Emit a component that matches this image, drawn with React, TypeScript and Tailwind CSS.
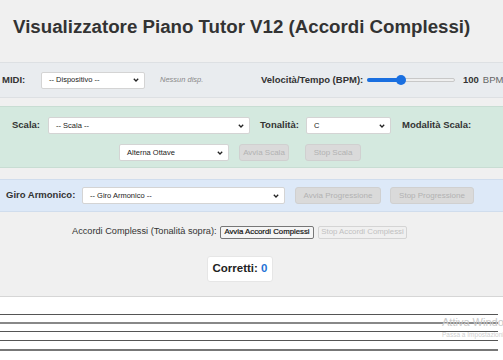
import React from 'react';

const sel = 'h-[17px] bg-white border border-[#d4d4d4] rounded-[2px] text-[7.5px] text-[#222] pl-[7px] pr-[5px] flex items-center justify-between shrink-0';

function Select({ label, className }: { label: string; className: string }) {
  return (
    <div className={`${sel} ${className}`}>
      <span>{label}</span>
      <svg width="6" height="4" viewBox="0 0 6 4">
        <path d="M0.8 0.8 L3 3 L5.2 0.8" stroke="#222" strokeWidth="1.3" fill="none" />
      </svg>
    </div>
  );
}

function Disabled({ label, className }: { label: string; className: string }) {
  return (
    <div className={`h-[17px] bg-[#dadada] border border-[#d0d0d0] rounded-[3px] text-[8px] text-[#b2b2b2] flex items-center justify-center shrink-0 ${className}`}>
      {label}
    </div>
  );
}

export default function App() {
  return (
    <div className="w-[503px] h-[360px] overflow-hidden bg-[#f0f0f0] text-[#333] relative" style={{ fontFamily: '"Liberation Sans", Arial, sans-serif' }}>
      <div className="h-[62px] pl-[13px] pt-[16px]">
        <h1 className="text-[18.7px] font-bold leading-[22px] text-[#333] whitespace-nowrap">Visualizzatore Piano Tutor V12 (Accordi Complessi)</h1>
      </div>

      {/* MIDI bar */}
      <div className="h-[36px] bg-[#e9ecef] border-y border-[#dde0e3] flex items-center whitespace-nowrap">
        <span className="text-[9.5px] font-bold w-[41px] shrink-0 pl-[2px]">MIDI:</span>
        <Select label="-- Dispositivo --" className="w-[104px]" />
        <span className="ml-[15px] text-[7.5px] italic text-[#8a8a8a] w-[101px] shrink-0">Nessun disp.</span>
        <span className="text-[9.5px] font-bold w-[106px] shrink-0">Velocità/Tempo (BPM):</span>
        <div className="w-[88px] h-[12px] relative flex items-center shrink-0">
          <div className="absolute left-0 right-0 h-[4px] rounded-full bg-[#efefef] border border-[#c8c8c8]" />
          <div className="absolute left-0 w-[34px] h-[4px] rounded-full bg-[#1a6fe0]" />
          <div className="absolute left-[29px] w-[10px] h-[10px] rounded-full bg-[#1a6fe0]" />
        </div>
        <span className="ml-[8px] text-[9.5px] font-bold">100</span>
        <span className="ml-[4px] text-[9.5px] text-[#666]">BPM</span>
      </div>

      {/* Scale section */}
      <div className="mt-[8px] h-[62px] bg-[#d4e9df] border-y border-[#c8ddd3] flex flex-col whitespace-nowrap">
        <div className="flex items-center mt-[10px]">
          <span className="ml-[12px] w-[36px] shrink-0 text-[9.5px] font-bold">Scala:</span>
          <Select label="-- Scala --" className="w-[202px]" />
          <span className="ml-[10px] w-[46px] shrink-0 text-[9.5px] font-bold">Tonalità:</span>
          <Select label="C" className="w-[85px]" />
          <span className="ml-[11px] text-[9.5px] font-bold">Modalità Scala:</span>
        </div>
        <div className="flex items-center mt-[10px]">
          <Select label="Alterna Ottave" className="ml-[119px] w-[110px]" />
          <Disabled label="Avvia Scala" className="ml-[10px] w-[50px]" />
          <Disabled label="Stop Scala" className="ml-[16px] w-[56px]" />
        </div>
      </div>

      {/* Giro section */}
      <div className="mt-[11px] h-[33px] bg-[#dde9f8] border-y border-[#d0dded] flex items-center whitespace-nowrap">
        <span className="ml-[6px] w-[76px] shrink-0 text-[9.5px] font-bold">Giro Armonico:</span>
        <Select label="-- Giro Armonico --" className="w-[203px]" />
        <Disabled label="Avvia Progressione" className="ml-[10px] w-[86px]" />
        <Disabled label="Stop Progressione" className="ml-[9px] w-[84px]" />
      </div>

      {/* Accordi */}
      <div className="mt-[14px] flex items-center whitespace-nowrap h-[12px]">
        <span className="ml-[72px] w-[148px] shrink-0 text-[9.2px] text-[#333]">Accordi Complessi (Tonalità sopra):</span>
        <div className="w-[94px] shrink-0 h-[13px] bg-[#f5f5f5] border border-[#777] rounded-[2px] text-[7.8px] text-[#111] flex items-center justify-center" style={{ WebkitTextStroke: '0.2px #111' }}>Avvia Accordi Complessi</div>
        <div className="ml-[4px] w-[89px] shrink-0 h-[13px] bg-[#f0f0f0] border border-[#d4d4d4] rounded-[2px] text-[7.8px] text-[#c0c0c0] flex items-center justify-center">Stop Accordi Complessi</div>
      </div>

      <div className="mt-[18px] flex">
        <div className="ml-[207px] w-[66px] h-[26px] bg-white border border-[#e6e6e6] rounded-[3px] flex items-center justify-center text-[11.5px] font-bold text-[#222]">
          Corretti:&nbsp;<span className="text-[#1f73d6]">0</span>
        </div>
      </div>

      {/* Staff */}
      <div className="absolute left-0 top-[296px] w-[503px] h-[64px] bg-white border-t border-[#d6d6d6]">
        <div className="flex flex-col w-[498px] mt-[17px]">
          <div className="h-[1px] bg-[#555]" />
          <div className="h-[2px] bg-[#888] mt-[7px]" />
          <div className="h-[1px] bg-[#555] mt-[7px]" />
          <div className="h-[1px] bg-[#555] mt-[8px]" />
          <div className="h-[2px] bg-[#777] mt-[8px]" />
        </div>
        <div className="absolute left-[442px] top-[19px] text-[11px] text-[#c8c8c8] leading-[13px] whitespace-nowrap">Attiva Windows</div>
        <div className="absolute left-[442px] top-[33px] text-[6.5px] text-[#cfcfcf] whitespace-nowrap">Passa a Impostazioni</div>
      </div>
    </div>
  );
}
